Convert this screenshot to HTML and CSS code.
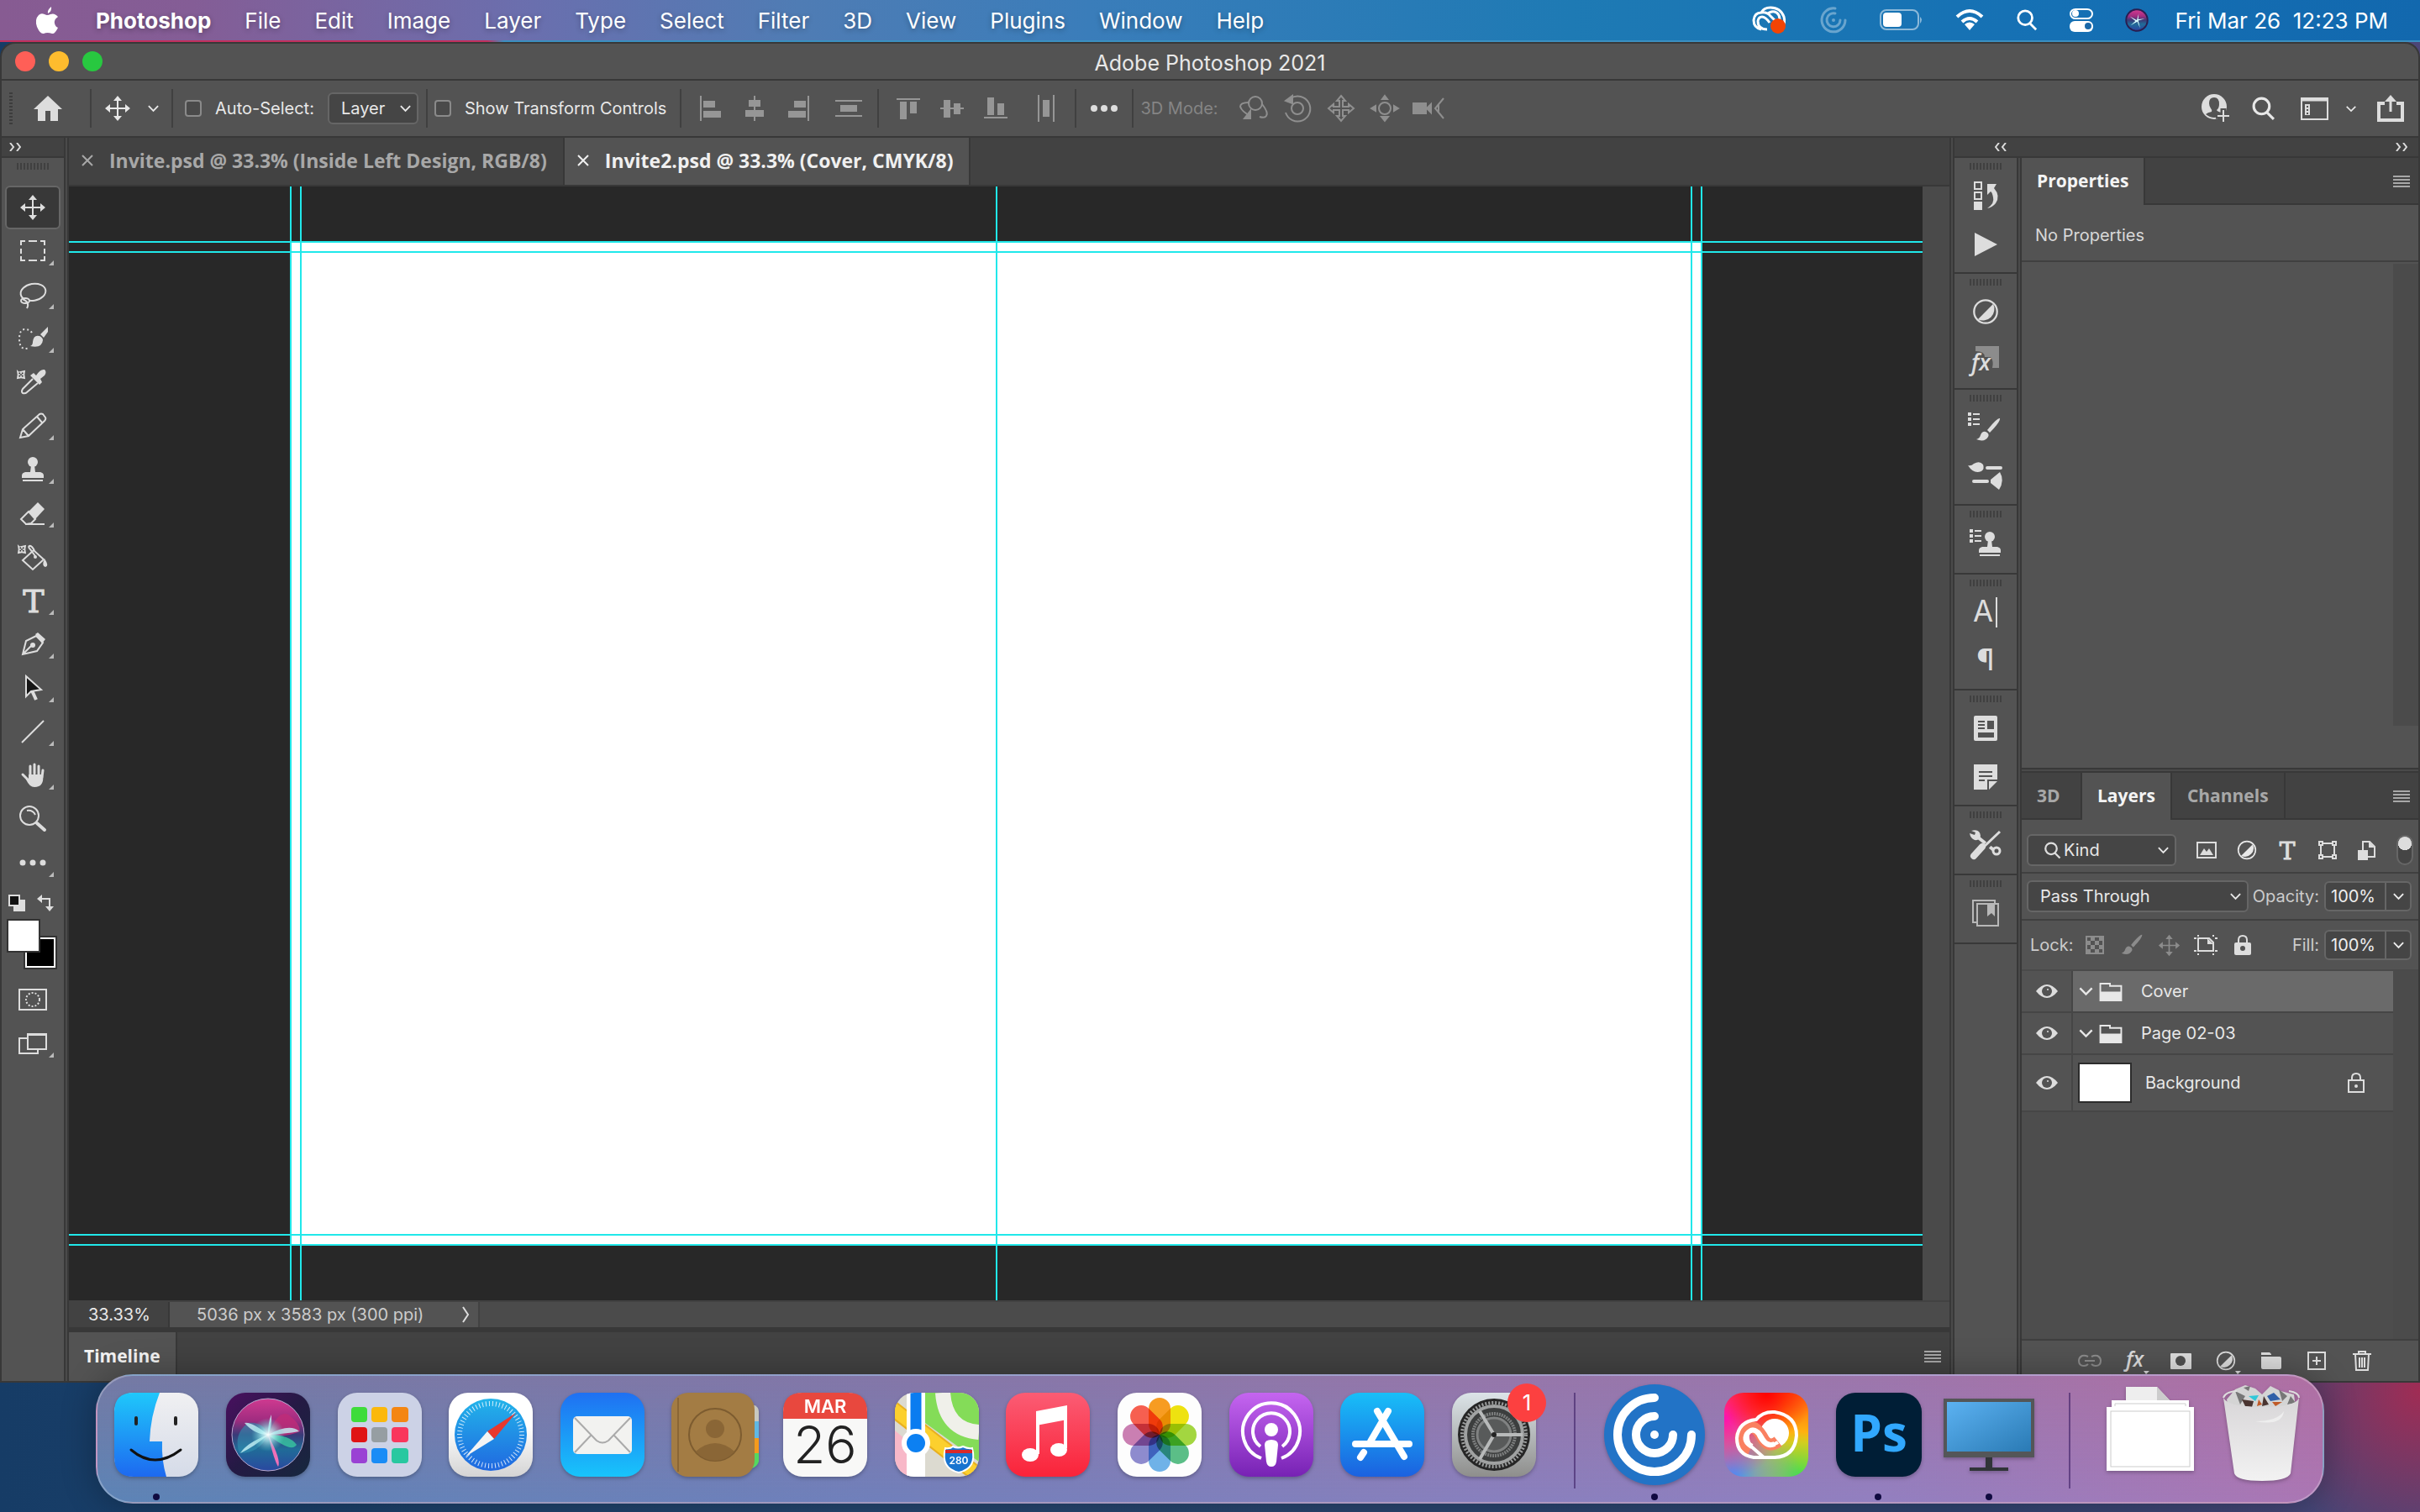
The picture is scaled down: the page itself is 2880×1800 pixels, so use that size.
FILE: index.html
```html
<!DOCTYPE html>
<html lang="en">
<head>
    <meta charset="UTF-8">
    <meta name="viewport" content="width=device-width, initial-scale=1.0">
    <title>Adobe Photoshop 2021</title>
    <link rel="stylesheet" href="styles.css">
</head>
<body>
    <!-- Shared icons -->
    <svg class="sprite" aria-hidden="true">
        <symbol id="chevron" viewBox="0 0 16 10"><path d="M2 2L8 8L14 2" fill="none" stroke="currentColor" stroke-width="2"/></symbol>
        <symbol id="move" viewBox="-16 -16 32 32"><path d="M0-12V12M-12 0H12" stroke="currentColor" stroke-width="2"/><path d="M0-15L5-9H-5ZM0 15L5 9H-5ZM-15 0L-9-5V5ZM15 0L9-5V5Z" fill="currentColor"/></symbol>
        <symbol id="corner" viewBox="-33 -26 66 52"><path d="M25 11V17H19Z" fill="#bbb"/></symbol>
        <symbol id="stamp" viewBox="-16 -16 32 32"><circle cx="0" cy="-9" r="6" fill="currentColor"/><path d="M-2-5H2L3 3H9Q13 4 13 7V10H-13V7Q-13 4-9 3H-3ZM-12 12H12V14H-12Z" fill="currentColor"/></symbol>
        <symbol id="adjust" viewBox="-14 -14 28 28"><circle r="12" fill="none" stroke="currentColor" stroke-width="2"/><path d="M8-8A12 12 0 0 1-8 8Z" fill="currentColor"/></symbol>
        <symbol id="brush" viewBox="0 0 32 32"><path d="M30 2Q27 1 15 16L18 19Q31 6 30 2ZM13 18Q9 17 7 22Q6 26 2 27Q12 31 16 24Q18 20 13 18Z" fill="currentColor"/></symbol>
        <symbol id="presets" viewBox="0 0 14 16"><path d="M0 0H4V4H0ZM0 6H4V10H0ZM0 12H4V16H0ZM6 1H14V3H6ZM6 7H14V9H6ZM6 13H14V15H6Z" fill="currentColor"/></symbol>
        <symbol id="pattern" viewBox="0 0 14 14"><path d="M1 0L4 3L13 1L12 7L13 13L7 12L1 13L2 7Z" fill="currentColor"/><path d="M4 4h2v2h-2zM8 4h2v2h-2zM6 6h2v2h-2zM4 8h2v2h-2zM8 8h2v2h-2z" fill="#333"/></symbol>
        <symbol id="search" viewBox="0 0 28 28"><circle cx="12" cy="11" r="9" fill="none" stroke="currentColor" stroke-width="3"/><path d="M18 18L26 26" stroke="currentColor" stroke-width="3"/></symbol>
        <symbol id="eye" viewBox="0 0 26 16"><path d="M0 8Q13-8 26 8Q13 24 0 8Z" fill="currentColor"/><circle cx="13" cy="8" r="6" fill="#535353"/><circle cx="14" cy="6" r="1" fill="currentColor"/></symbol>
        <symbol id="folder" viewBox="0 0 28 24"><path d="M1 23V2H13V5H27V23Z" fill="none" stroke="currentColor" stroke-width="2"/><path d="M1 12H27V23H1Z" fill="currentColor"/></symbol>
        <symbol id="burger" viewBox="0 0 20 14"><path d="M0 1H20M0 5H20M0 9H20M0 13H20" stroke="#a8a8a8" stroke-width="2"/></symbol>
        <symbol id="close" viewBox="0 0 14 14"><path d="M1 1L13 13M13 1L1 13" stroke="currentColor" stroke-width="2"/></symbol>
        <symbol id="double" viewBox="0 0 14 10"><path d="M1 0L5 5L1 10M9 0L13 5L9 10" fill="none" stroke="#ddd" stroke-width="2"/></symbol>
        <linearGradient id="g-finder" x2="0" y2="1"><stop offset="0" stop-color="#1fc8fb"/><stop offset="1" stop-color="#1d69f0"/></linearGradient>
        <linearGradient id="g-face" x2="0" y2="1"><stop offset="0" stop-color="#f0f0f2"/><stop offset="1" stop-color="#d5dbe8"/></linearGradient>
        <linearGradient id="g-siri" x2="1" y2="1"><stop offset="0" stop-color="#4a1060"/><stop offset="0.5" stop-color="#241a44"/><stop offset="1" stop-color="#16283e"/></linearGradient>
        <linearGradient id="g-orb" x2="0" y2="1"><stop offset="0" stop-color="#d03a90"/><stop offset="0.3" stop-color="#a02c80"/><stop offset="0.5" stop-color="#3a3a78"/><stop offset="0.7" stop-color="#206c98"/><stop offset="1" stop-color="#2a48a0"/></linearGradient>
        <radialGradient id="g-glow"><stop offset="0" stop-color="#fff"/><stop offset="0.4" stop-color="#b0f4f4" stop-opacity="0.7"/><stop offset="1" stop-color="#60d0d0" stop-opacity="0"/></radialGradient>
        <linearGradient id="g-safari" x2="0" y2="1"><stop offset="0" stop-color="#22b4ea"/><stop offset="1" stop-color="#2068e0"/></linearGradient>
        <linearGradient id="g-paper" x2="0" y2="1"><stop offset="0.4" stop-color="#fff"/><stop offset="1" stop-color="#d4d4d4"/></linearGradient>
        <linearGradient id="g-mail" x2="0" y2="1"><stop offset="0" stop-color="#1f70f2"/><stop offset="1" stop-color="#18c4fb"/></linearGradient>
        <linearGradient id="g-music" x2="0" y2="1"><stop offset="0" stop-color="#fb5c74"/><stop offset="1" stop-color="#fa2339"/></linearGradient>
        <linearGradient id="g-podcast" x2="0" y2="1"><stop offset="0" stop-color="#c565f0"/><stop offset="1" stop-color="#7722b4"/></linearGradient>
        <linearGradient id="g-store" x2="0" y2="1"><stop offset="0" stop-color="#18bff8"/><stop offset="1" stop-color="#1b61e0"/></linearGradient>
        <linearGradient id="g-metal" x2="0" y2="1"><stop offset="0" stop-color="#dce4e8"/><stop offset="1" stop-color="#8e8e8c"/></linearGradient>
        <linearGradient id="g-screen" x2="1" y2="1"><stop offset="0" stop-color="#5cb2f2"/><stop offset="1" stop-color="#2a7ab4"/></linearGradient>
        <linearGradient id="g-bin" x2="0" y2="1"><stop offset="0" stop-color="#d8d6d8"/><stop offset="1" stop-color="#f2f2f2"/></linearGradient>
    </svg>

    <!-- Menu bar -->
    <header class="menubar">
        <nav class="menus">
            <button class="apple" aria-label="Apple">
                <svg width="28" height="34" viewBox="0 0 28 34"><path d="M19 1Q20 6 15 9Q14 5 19 1ZM14 11Q16 11 18 10Q23 8 27 13Q22 16 23 21Q24 25 27 26Q23 34 20 33Q14 31 10 33Q6 34 2 25Q-1 16 4 11Q7 8 11 10Q13 11 14 11Z" fill="#fff"/></svg>
            </button>
            <button class="app-name">Photoshop</button>
            <button>File</button>
            <button>Edit</button>
            <button>Image</button>
            <button>Layer</button>
            <button>Type</button>
            <button>Select</button>
            <button>Filter</button>
            <button>3D</button>
            <button>View</button>
            <button>Plugins</button>
            <button>Window</button>
            <button>Help</button>
        </nav>
        <div class="status-icons">
            <svg width="42" height="34" viewBox="0 0 42 34"><path d="M11 28Q2 26 2 17Q3 8 11 8Q14 2 22 2Q34 2 38 13Q40 20 36 26M11 8Q18 7 22 12L30 20M18 28Q7 28 7 18Q8 13 12 13Q16 13 21 20M18 10Q22 6 27 7Q33 9 33 16" fill="none" stroke="#fff" stroke-width="3"/><circle cx="31" cy="24" r="9" fill="#f24405"/></svg>
            <svg width="34" height="34" viewBox="-17 -17 34 34" opacity="0.35"><path d="M2-14A14 14 0 1 0 14 0M2-8A8 8 0 1 0 8 0" fill="none" stroke="#fff" stroke-width="3" stroke-linecap="round"/><circle r="2" fill="#fff"/></svg>
            <svg width="52" height="26" viewBox="0 0 52 26"><rect x="1" y="1" width="45" height="23" rx="7" fill="none" stroke="#fff" stroke-opacity="0.5" stroke-width="2"/><rect x="4" y="4" width="22" height="17" rx="4" fill="#fff"/><path d="M48 9Q52 12 48 17Z" fill="#fff" opacity="0.5"/></svg>
            <svg width="34" height="26" viewBox="0 0 34 26"><path d="M2 9Q17-5 32 9M8 15Q17 7 26 15" fill="none" stroke="#fff" stroke-width="4"/><path d="M11 18Q17 13 23 18L17 25Z" fill="#fff"/></svg>
            <svg width="26" height="26"><use href="#search"/></svg>
            <svg width="28" height="28" viewBox="0 0 28 28"><rect x="1" y="1" width="26" height="11" rx="6" fill="none" stroke="#fff" stroke-width="2"/><circle cx="7" cy="6" r="4" fill="#fff"/><rect y="15" width="28" height="13" rx="6" fill="#fff"/><circle cx="22" cy="21" r="4" fill="#1a68a8"/></svg>
            <svg width="28" height="28" viewBox="0 0 100 100"><circle cx="50" cy="50" r="49" fill="#2a1d50"/><circle cx="50" cy="50" r="42" fill="url(#g-orb)"/><path d="M50 50L20 34L44 54L24 72L52 56L64 84L56 52L84 44L56 46L58 22Z" fill="#d8ffff"/></svg>
        </div>
        <time class="clock">Fri Mar 26&nbsp; 12:23 PM</time>
    </header>

    <!-- Photoshop window -->
    <main class="window">
        <div class="titlebar">
            <div class="lights">
                <button class="light red" aria-label="Close"></button>
                <button class="light yellow" aria-label="Minimize"></button>
                <button class="light green" aria-label="Zoom"></button>
            </div>
            <h1>Adobe Photoshop 2021</h1>
        </div>

        <div class="options">
            <span class="dots-grip"></span>
            <button class="home" aria-label="Home"><svg width="34" height="30" viewBox="0 0 34 30"><path d="M17 0L34 16H29V30H20V18H14V30H5V16H0Z" fill="#ddd"/></svg></button>
            <span class="sep"></span>
            <button class="current-tool" aria-label="Move tool"><svg width="32" height="32"><use href="#move"/></svg><svg width="15" height="10"><use href="#chevron"/></svg></button>
            <span class="sep"></span>
            <label class="check"><input type="checkbox">Auto-Select:</label>
            <span class="select layer-select"><select aria-label="Auto-select target"><option>Layer</option></select><svg width="15" height="10"><use href="#chevron"/></svg></span>
            <span class="sep"></span>
            <label class="check transform"><input type="checkbox">Show Transform Controls</label>
            <span class="sep"></span>
            <div class="align">
                <button aria-label="Align left edges"><svg width="28" height="30" viewBox="0 0 28 30"><path d="M1 0h2v30h-2zM5 6h14v8h-14zM5 18h21v8h-21z"/></svg></button>
                <button aria-label="Align horizontal centers"><svg width="28" height="30" viewBox="0 0 28 30"><path d="M13 0h2v30h-2zM7 5h14v8h-14zM3 17h22v8h-22z"/></svg></button>
                <button aria-label="Align right edges"><svg width="28" height="30" viewBox="0 0 28 30"><path d="M25 0h2v30h-2zM9 6h14v8h-14zM2 18h21v8h-21z"/></svg></button>
                <button class="wide" aria-label="Distribute vertically"><svg width="32" height="30" viewBox="0 0 32 30"><path d="M0 5h32v2h-32zM6 11h20v8h-20zM0 23h32v2h-32z"/></svg></button>
            </div>
            <span class="sep"></span>
            <div class="align">
                <button aria-label="Align top edges"><svg width="28" height="30" viewBox="0 0 28 30"><path d="M0 3h28v2h-28zM4 7h8v21h-8zM16 7h8v14h-8z"/></svg></button>
                <button aria-label="Align vertical centers"><svg width="28" height="30" viewBox="0 0 28 30"><path d="M0 14h28v2h-28zM4 5h8v21h-8zM16 9h8v13h-8z"/></svg></button>
                <button aria-label="Align bottom edges"><svg width="28" height="30" viewBox="0 0 28 30"><path d="M0 25h28v2h-28zM4 2h8v21h-8zM16 9h8v14h-8z"/></svg></button>
                <button class="wide" aria-label="Distribute horizontally"><svg width="22" height="32" viewBox="0 0 22 32"><path d="M1 0h2v32h-2zM7 6h8v20h-8zM19 0h2v32h-2z"/></svg></button>
            </div>
            <span class="sep"></span>
            <button class="more" aria-label="Align and distribute"><svg width="32" height="8" viewBox="0 0 32 8"><circle cx="4" cy="4" r="4"/><circle cx="16" cy="4" r="4"/><circle cx="28" cy="4" r="4"/></svg></button>
            <span class="sep"></span>
            <span class="mode">3D Mode:</span>
            <div class="align outline">
                <button disabled aria-label="Orbit"><svg width="36" height="30" viewBox="0 0 36 30"><circle cx="20" cy="9" r="8"/><path d="M12 8Q2 8 2 13Q4 19 14 24M28 10Q36 20 33 24Q31 27 25 25"/><path d="M14 18L14 27H7Z" fill="#8f8f8f"/></svg></button>
                <button disabled aria-label="Roll"><svg width="34" height="34" viewBox="-17 -17 34 34"><circle r="7"/><path d="M-8-12A15 15 0 1 1-14 5"/><path d="M-6-15L-6-6L-14-9Z" fill="#8f8f8f"/></svg></button>
                <button disabled aria-label="Pan"><svg width="34" height="34" viewBox="-17 -17 34 34"><path d="M0-15L5-9H2V-2H9V-5L15 0L9 5V2H2V9H5L0 15L-5 9H-2V2H-9V5L-15 0L-9-5V-2H-2V-9H-5Z"/></svg></button>
                <button disabled aria-label="Slide"><svg width="36" height="34" viewBox="-18 -17 36 34"><circle r="7"/><path d="M0-15L3-11H-3ZM0 15L4 10H-4ZM-16 0L-11-3V3ZM16 0L11-3V3Z" fill="#8f8f8f"/></svg></button>
                <button disabled aria-label="Zoom camera"><svg width="38" height="26" viewBox="0 0 38 26"><rect x="1" y="7" width="15" height="12" fill="#8f8f8f"/><path d="M17 13L22 8V18Z" fill="#8f8f8f"/><path d="M37 1L27 13L37 25M31 9V17"/></svg></button>
            </div>
            <div class="right-tools">
                <button aria-label="Account"><svg width="36" height="36" viewBox="0 0 36 36"><circle cx="16" cy="16" r="15" fill="#ddd"/><path d="M16 5Q22 5 22 13Q22 18 19 20Q20 22 25 23Q21 29 16 29Q11 29 6 25Q8 23 13 22Q14 20 12 18Q10 15 10 12Q10 5 16 5Z" fill="#535353"/><path d="M27 18V36M18 27H36" stroke="#535353" stroke-width="7"/><path d="M27 20V34M20 27H34" stroke="#ddd" stroke-width="2"/></svg></button>
                <button aria-label="Search"><svg width="29" height="29"><use href="#search"/></svg></button>
                <button class="workspace" aria-label="Workspace"><svg width="33" height="27" viewBox="0 0 33 27"><path d="M1 1H32V26H1Z" fill="none" stroke="#ddd" stroke-width="2"/><path d="M1 1H32V4H1Z" fill="#ddd" stroke="#ddd"/><path d="M5 8H11V21H5Z" fill="#ddd"/><path d="M7 10h2v2h-2zM7 14h2v2h-2zM7 18h2v2h-2z" fill="#535353"/></svg><svg width="14" height="9"><use href="#chevron"/></svg></button>
                <button aria-label="Share"><svg width="32" height="32" viewBox="0 0 32 32"><path d="M9 10H2V30H30V10H23" fill="none" stroke="#ddd" stroke-width="4"/><path d="M16 20V6" stroke="#ddd" stroke-width="3"/><path d="M16 0L23 8H9Z" fill="#ddd"/></svg></button>
            </div>
        </div>

        <div class="workspace-body">
            <!-- Tools -->
            <aside class="tools">
                <div class="strip-head"><svg width="14" height="10"><use href="#double"/></svg></div>
                <div class="grip"></div>
                <div class="tool-list">
                    <button class="tool active" aria-label="Move"><svg viewBox="-33 -26 66 52"><use href="#move" x="-16" y="-16" width="32" height="32"/></svg></button>
                    <button class="tool" aria-label="Marquee"><svg viewBox="-33 -26 66 52"><path d="M-14-7V-12H-9M9-12H14V-7M14 6V11H9M-9 11H-14V6M-5-12H5M-5 11H5M-14-3V3M14-3V3" fill="none" stroke="#ddd" stroke-width="2"/><use href="#corner" x="-33" y="-26" width="66" height="52"/></svg></button>
                    <button class="tool" aria-label="Lasso"><svg viewBox="-33 -26 66 52"><ellipse cx="1" cy="-3" rx="15" ry="10" transform="rotate(-10)" fill="none" stroke="#ddd" stroke-width="2"/><ellipse cx="-9" cy="7" rx="5" ry="3" fill="#535353" stroke="#ddd" stroke-width="2"/><path d="M-12 5Q-3 9-7 16" fill="none" stroke="#ddd" stroke-width="2"/><use href="#corner" x="-33" y="-26" width="66" height="52"/></svg></button>
                    <button class="tool" aria-label="Quick selection"><svg viewBox="-33 -26 66 52"><path d="M-1-7Q-4-11-10-11Q-16-10-16 0Q-16 11-10 12Q-7 12-4 11" fill="none" stroke="#ddd" stroke-width="2" stroke-dasharray="2 3"/><path d="M18-14L9-5L13-1L18-8ZM8-3Q1-5 0 4Q0 8-3 9Q11 12 12 2Q12-1 8-3Z" fill="#ddd"/><use href="#corner" x="-33" y="-26" width="66" height="52"/></svg></button>
                    <button class="tool" aria-label="Eyedropper"><svg viewBox="-33 -26 66 52"><use href="#pattern" x="-20" y="-16" width="12" height="14"/><path d="M0-4L-12 8Q-14 11-12 13Q-9 14-7 12L6 1" fill="none" stroke="#ddd" stroke-width="2"/><path d="M-3-8L1-11L4-8Q9-16 14-15Q17-12 14-8L9-4L11 0L8 3Z" fill="#ddd"/></svg></button>
                    <button class="tool" aria-label="Pencil"><svg viewBox="-33 -26 66 52"><path d="M-15 14L-12 4L8-14Q10-15 12-14L15-10Q16-8 14-6L-5 12ZM5-11L11-4M-12 4L-5 12" fill="none" stroke="#ddd" stroke-width="2"/><use href="#corner" x="-33" y="-26" width="66" height="52"/></svg></button>
                    <button class="tool" aria-label="Clone stamp"><svg viewBox="-33 -26 66 52"><use href="#stamp" x="-16" y="-16" width="32" height="32"/><use href="#corner" x="-33" y="-26" width="66" height="52"/></svg></button>
                    <button class="tool" aria-label="Eraser"><svg viewBox="-33 -26 66 52"><path d="M-5-2L6-13L14-5L3 7Z" fill="#ddd"/><path d="M-5-2L-14 7L-8 13L-2 12L3 7ZM-9 13H14" fill="none" stroke="#ddd" stroke-width="2"/><use href="#corner" x="-33" y="-26" width="66" height="52"/></svg></button>
                    <button class="tool" aria-label="Paint bucket"><svg viewBox="-33 -26 66 52"><use href="#pattern" x="-19" y="-16" width="12" height="14"/><path d="M-12 4L1-8L13 3L0 15ZM3-1L-3-9Q-6-12-4-13Q-1-14 2-7" fill="none" stroke="#ddd" stroke-width="2"/><circle cx="3" cy="0" r="2" fill="#ddd"/><path d="M14 2Q20 11 15 12Q10 11 14 2Z" fill="#ddd"/></svg></button>
                    <button class="tool" aria-label="Type"><svg viewBox="-33 -26 66 52"><text class="slab" x="1" y="14" font-size="38">T</text><use href="#corner" x="-33" y="-26" width="66" height="52"/></svg></button>
                    <button class="tool" aria-label="Pen"><svg viewBox="-33 -26 66 52"><path d="M-12 12L-8-4L4-10L12-2L5 8ZM-12 12L-1 1" fill="none" stroke="#ddd" stroke-width="2"/><circle cx="0" cy="1" r="3" fill="#ddd"/><path d="M3-12L6-14L15-6L11-1Z" fill="#ddd"/><use href="#corner" x="-33" y="-26" width="66" height="52"/></svg></button>
                    <button class="tool" aria-label="Path selection"><svg viewBox="-33 -26 66 52"><path d="M-1 3L4 14" stroke="#ddd" stroke-width="4"/><path d="M-8-14V10L-2 4L10 2Z" fill="#151515" stroke="#ddd" stroke-width="2"/><use href="#corner" x="-33" y="-26" width="66" height="52"/></svg></button>
                    <button class="tool" aria-label="Line"><svg viewBox="-33 -26 66 52"><path d="M-13 13L13-13" stroke="#ddd" stroke-width="2"/><use href="#corner" x="-33" y="-26" width="66" height="52"/></svg></button>
                    <button class="tool" aria-label="Hand"><svg viewBox="-33 -26 66 52"><path d="M-3 0V-11M2-2V-13M7-1V-11M11 2L12-6M-12-1L-4 7" stroke="#ddd" stroke-width="3" stroke-linecap="round"/><path d="M-5-1H12Q14 14 2 14Q-4 14-8 5L-5 5Z" fill="#ddd"/><use href="#corner" x="-33" y="-26" width="66" height="52"/></svg></button>
                    <button class="tool" aria-label="Zoom"><svg viewBox="-33 -26 66 52"><circle cx="-4" cy="-4" r="11" fill="none" stroke="#ddd" stroke-width="2"/><path d="M-7-10Q0-11 3-5" fill="none" stroke="#ddd" stroke-width="2"/><path d="M5 5L14 13" stroke="#ddd" stroke-width="4" stroke-linecap="round"/></svg></button>
                    <button class="tool" aria-label="Edit toolbar"><svg viewBox="-33 -26 66 52"><path d="M-12 0h0M0 0h0M12 0h0" stroke="#ddd" stroke-width="7" stroke-linecap="round"/><use href="#corner" x="-33" y="-26" width="66" height="52"/></svg></button>
                </div>
                <div class="mini-swatches">
                    <button aria-label="Default colors"><svg width="20" height="20" viewBox="0 0 20 20"><path d="M6 6H20V20H6Z" fill="#ddd"/><path d="M1 1H13V13H1Z" fill="#111" stroke="#ddd" stroke-width="2"/></svg></button>
                    <button aria-label="Switch colors"><svg width="20" height="20" viewBox="0 0 20 20"><path d="M4 5H15V15" fill="none" stroke="#ddd" stroke-width="2"/><path d="M0 5L6 0V10ZM15 20L10 14H20Z" fill="#ddd"/></svg></button>
                </div>
                <div class="swatches">
                    <button class="swatch back" aria-label="Background color"></button>
                    <button class="swatch front" aria-label="Foreground color"></button>
                </div>
                <button class="tool" aria-label="Quick mask"><svg viewBox="-33 -26 66 52"><rect x="-16" y="-12" width="32" height="24" fill="none" stroke="#ddd" stroke-width="2"/><circle r="8" fill="none" stroke="#ddd" stroke-width="2" stroke-dasharray="2 2"/></svg></button>
                <button class="tool" aria-label="Screen mode"><svg viewBox="-33 -26 66 52"><path d="M-6-6H-16V12H6V7" fill="none" stroke="#ddd" stroke-width="2"/><rect x="-6" y="-11" width="22" height="18" fill="#535353" stroke="#ddd" stroke-width="2"/><path d="M-6-11H16V-9H-6Z" fill="#ddd"/><use href="#corner" x="-33" y="-26" width="66" height="52"/></svg></button>
            </aside>

            <!-- Document -->
            <section class="document">
                <div class="doc-tabs">
                    <div class="doc-tab"><button aria-label="Close Invite.psd"><svg width="14" height="14"><use href="#close"/></svg></button>Invite.psd @ 33.3% (Inside Left Design, RGB/8)</div>
                    <div class="doc-tab active"><button aria-label="Close Invite2.psd"><svg width="14" height="14"><use href="#close"/></svg></button>Invite2.psd @ 33.3% (Cover, CMYK/8)</div>
                </div>
                <div class="view">
                    <div class="canvas">
                        <div class="page"></div>
                        <i class="guide v g1"></i>
                        <i class="guide v g2"></i>
                        <i class="guide v g3"></i>
                        <i class="guide v g4"></i>
                        <i class="guide v g5"></i>
                        <i class="guide h g6"></i>
                        <i class="guide h g7"></i>
                        <i class="guide h g8"></i>
                        <i class="guide h g9"></i>
                    </div>
                    <div class="scrollbar"></div>
                </div>
                <div class="doc-status">
                    <input class="zoom-level" type="text" value="33.33%" aria-label="Zoom level">
                    <button class="doc-info">5036 px x 3583 px (300 ppi)<svg width="10" height="20" viewBox="0 0 10 20"><path d="M2 1L8 10L2 19" fill="none" stroke="#ddd" stroke-width="2"/></svg></button>
                </div>
                <div class="timeline">
                    <button class="panel-tab active">Timeline</button>
                    <button class="panel-menu" aria-label="Timeline menu"><svg width="20" height="14"><use href="#burger"/></svg></button>
                </div>
            </section>

            <!-- Panels -->
            <aside class="right">
                <div class="strip-head split">
                    <svg class="flip" width="14" height="10"><use href="#double"/></svg>
                    <svg width="14" height="10"><use href="#double"/></svg>
                </div>
                <div class="right-body">
                    <div class="icon-strip">
                        <div class="icon-group">
                            <div class="grip"></div>
                            <button aria-label="History"><svg width="32" height="36" viewBox="0 0 32 36"><path d="M3 2h8v8h-8zM3 14h8v8h-8z" fill="none" stroke="#ddd" stroke-width="2"/><path d="M2 25h10v10h-10zM18 4H29L26 9Q34 18 28 27Q24 32 18 33Q27 27 25 20Q24 14 22 13L18 17Z" fill="#ddd"/></svg></button>
                            <button aria-label="Actions"><svg width="28" height="28" viewBox="0 0 28 28"><path d="M1 0L28 14L1 28Z" fill="#ddd"/></svg></button>
                        </div>
                        <div class="icon-group">
                            <div class="grip"></div>
                            <button aria-label="Adjustments"><svg width="32" height="32"><use href="#adjust"/></svg></button>
                            <button aria-label="Styles"><svg width="36" height="38" viewBox="0 0 36 38"><path d="M6 2H34V28H26Q28 20 24 15H17Q17 8 6 8Z" fill="#8c8c8c"/><text class="fx" x="1" y="31" font-size="27">fx</text></svg></button>
                        </div>
                        <div class="icon-group">
                            <div class="grip"></div>
                            <button aria-label="Brush settings"><svg width="42" height="38" viewBox="0 0 42 38"><use href="#presets" x="0" y="1" width="14" height="16"/><use href="#brush" x="7" y="6" width="34" height="32"/></svg></button>
                            <button aria-label="Brushes"><svg width="42" height="34" viewBox="0 0 42 34"><path d="M0 4Q4 5 7 2Q14-2 18 3Q20 8 16 11Q7 15 0 4ZM38 12Q44 22 37 33L27 25V21Z" fill="#ddd"/><path d="M23 7H39M7 23H23" stroke="#ddd" stroke-width="4" stroke-linecap="round"/></svg></button>
                        </div>
                        <div class="icon-group">
                            <div class="grip"></div>
                            <button aria-label="Clone source"><svg width="42" height="38" viewBox="0 0 42 38"><use href="#presets" x="2" y="2" width="14" height="16"/><use href="#stamp" x="10" y="4" width="32" height="32"/></svg></button>
                        </div>
                        <div class="icon-group">
                            <div class="grip"></div>
                            <button aria-label="Character"><svg width="32" height="38" viewBox="0 0 32 38"><text class="plain" x="1" y="30" font-size="35">A</text><path d="M29 1V37" stroke="#ddd" stroke-width="2"/></svg></button>
                            <button aria-label="Paragraph"><svg width="32" height="38" viewBox="0 0 32 38"><text class="plain" x="5" y="30" font-size="36">¶</text></svg></button>
                        </div>
                        <div class="icon-group">
                            <div class="grip"></div>
                            <button aria-label="Libraries"><svg width="28" height="30" viewBox="0 0 28 30"><rect width="28" height="30" rx="2" fill="#ddd"/><path d="M5 7H13M5 11H13M5 15H13" stroke="#535353" stroke-width="2"/><path d="M16 6h8v10h-8zM5 20h19v6h-19z" fill="#535353"/></svg></button>
                            <button aria-label="Notes"><svg width="28" height="30" viewBox="0 0 28 30"><path d="M0 0H28V18H16V30H0ZM18 20H28L18 30Z" fill="#ddd"/><path d="M6 9H22M6 14H22M6 19H13" stroke="#535353" stroke-width="2"/></svg></button>
                        </div>
                        <div class="icon-group">
                            <div class="grip"></div>
                            <button aria-label="Tool presets"><svg width="38" height="34" viewBox="0 0 38 34"><path d="M9 8L30 25" stroke="#ddd" stroke-width="4"/><path d="M0 4L6 6L7 3L2 1Q12-2 13 7Q12 13 6 12Q1 10 0 4Z" fill="#ddd"/><circle cx="32" cy="25" r="4" fill="#535353" stroke="#ddd" stroke-width="3"/><path d="M35 3L18 22" stroke="#535353" stroke-width="7"/><path d="M36 2L16 21" stroke="#ddd" stroke-width="3"/><path d="M15 20L5 31" stroke="#ddd" stroke-width="8" stroke-linecap="round"/></svg></button>
                        </div>
                        <div class="icon-group">
                            <div class="grip"></div>
                            <button aria-label="Layer comps"><svg width="34" height="34" viewBox="0 0 34 34"><path d="M6 28H2V2H28V6M7 6H32V32H7Z" fill="none" stroke="#b8b8b8" stroke-width="2"/><path d="M19 6H28V21L24 17L19 21Z" fill="#b8b8b8"/></svg></button>
                        </div>
                    </div>

                    <div class="panels">
                        <section class="properties">
                            <div class="panel-tabs">
                                <button class="panel-tab active">Properties</button>
                                <button class="panel-menu" aria-label="Properties menu"><svg width="20" height="14"><use href="#burger"/></svg></button>
                            </div>
                            <p class="no-properties">No Properties</p>
                            <div class="properties-body"><div class="track"></div></div>
                        </section>

                        <section class="layers">
                            <div class="panel-tabs">
                                <button class="panel-tab">3D</button>
                                <button class="panel-tab active">Layers</button>
                                <button class="panel-tab">Channels</button>
                                <button class="panel-menu" aria-label="Layers menu"><svg width="20" height="14"><use href="#burger"/></svg></button>
                            </div>
                            <div class="layer-row filter">
                                <span class="select kind"><svg class="lens" width="21" height="21"><use href="#search"/></svg><select aria-label="Filter type"><option>Kind</option></select><svg width="15" height="10"><use href="#chevron"/></svg></span>
                                <div class="filter-icons">
                                    <button aria-label="Pixel layers"><svg width="24" height="20" viewBox="0 0 24 20"><rect x="1" y="1" width="22" height="18" fill="none" stroke="#ddd" stroke-width="2"/><path d="M4 16L9 8L12 12L15 8L20 16Z" fill="#ddd"/></svg></button>
                                    <button aria-label="Adjustment layers"><svg width="24" height="24"><use href="#adjust"/></svg></button>
                                    <button aria-label="Type layers"><svg width="24" height="24" viewBox="-12 -12 24 24"><text class="slab" x="0" y="11" font-size="28">T</text></svg></button>
                                    <button aria-label="Shape layers"><svg width="24" height="24" viewBox="0 0 24 24"><path d="M4 4H20V20H4Z" fill="none" stroke="#ddd" stroke-width="2"/><path d="M2 2h4v4h-4zM18 2h4v4h-4zM2 18h4v4h-4zM18 18h4v4h-4z" fill="#535353" stroke="#ddd" stroke-width="2"/></svg></button>
                                    <button aria-label="Smart objects"><svg width="22" height="24" viewBox="0 0 22 24"><path d="M6 12V2H14L20 8V20H12" fill="none" stroke="#ddd" stroke-width="2"/><path d="M0 12H12V24H0ZM13 2V9H20" fill="#ddd"/></svg></button>
                                </div>
                                <input class="toggle" type="checkbox" aria-label="Layer filtering">
                            </div>
                            <div class="layer-row">
                                <span class="select blend"><select aria-label="Blend mode"><option>Pass Through</option></select><svg width="15" height="10"><use href="#chevron"/></svg></span>
                                <label class="amount">Opacity:<span><input type="text" value="100%"><button aria-label="Opacity slider"><svg width="15" height="10"><use href="#chevron"/></svg></button></span></label>
                            </div>
                            <div class="layer-row locks">
                                <span class="lock-label">Lock:</span>
                                <div class="lock-icons">
                                    <button class="dim" aria-label="Lock transparent pixels"><svg width="22" height="22" viewBox="0 0 22 22"><rect x="1" y="1" width="20" height="20" fill="none" stroke="currentColor" stroke-width="2"/><path d="M6 2h5v4h-5zM16 2h4v4h-4zM2 6h4v5h-4zM11 6h5v5h-5zM6 11h5v5h-5zM16 11h4v5h-4zM2 16h4v4h-4zM11 16h5v4h-5z" fill="currentColor"/></svg></button>
                                    <button class="dim" aria-label="Lock image pixels"><svg width="28" height="28"><use href="#brush"/></svg></button>
                                    <button class="dim" aria-label="Lock position"><svg width="27" height="27"><use href="#move"/></svg></button>
                                    <button aria-label="Lock artboard"><svg width="28" height="24" viewBox="0 0 28 24"><path d="M5 4H18L23 9V19H5Z" fill="none" stroke="#ddd" stroke-width="2"/><path d="M16 4V11H23ZM0 3h3v2h-3zM4 0h2v2h-2zM25 3h3v2h-3zM22 0h2v2h-2zM0 18h3v2h-3zM4 22h2v2h-2zM25 18h3v2h-3zM22 22h2v2h-2z" fill="#ddd"/></svg></button>
                                    <button aria-label="Lock all"><svg width="20" height="24" viewBox="0 0 20 24"><path d="M5 11V6Q5 1 10 1Q15 1 15 6V11" fill="none" stroke="#ddd" stroke-width="2"/><rect y="9" width="20" height="15" rx="2" fill="#ddd"/><circle cx="10" cy="16" r="3" fill="#535353"/></svg></button>
                                </div>
                                <label class="amount">Fill:<span><input type="text" value="100%"><button aria-label="Fill slider"><svg width="15" height="10"><use href="#chevron"/></svg></button></span></label>
                            </div>
                            <div class="layer-area">
                                <ul class="layer-list">
                                    <li class="selected"><button class="vis" aria-label="Hide Cover"><svg width="26" height="16"><use href="#eye"/></svg></button><div class="layer"><svg width="19" height="12"><use href="#chevron"/></svg><svg width="28" height="23"><use href="#folder"/></svg><span class="group-name">Cover</span></div></li>
                                    <li><button class="vis" aria-label="Hide Page 02-03"><svg width="26" height="16"><use href="#eye"/></svg></button><div class="layer"><svg width="19" height="12"><use href="#chevron"/></svg><svg width="28" height="23"><use href="#folder"/></svg><span class="group-name">Page 02-03</span></div></li>
                                    <li class="tall"><button class="vis" aria-label="Hide Background"><svg width="26" height="16"><use href="#eye"/></svg></button><div class="layer"><span class="thumb"></span>Background<svg class="locked" width="20" height="24" viewBox="0 0 20 24"><path d="M5 9V6Q5 1 10 1Q15 1 15 6V9M1 9H19V23H1Z" fill="none" stroke="#ddd" stroke-width="2"/><circle cx="10" cy="16" r="2" fill="#ddd"/></svg></div></li>
                                </ul>
                                <div class="track"></div>
                            </div>
                            <div class="layer-actions">
                                <button class="dim" aria-label="Link layers"><svg width="28" height="16" viewBox="0 0 28 16"><path d="M12 3Q8 1 5 2Q1 4 1 8Q1 14 7 14Q10 14 12 12M16 3Q20 1 23 2Q27 4 27 8Q27 14 21 14Q18 14 16 12M8 8H20" fill="none" stroke="currentColor" stroke-width="2"/></svg></button>
                                <button aria-label="Layer effects"><svg width="30" height="36" viewBox="0 0 30 36"><text class="fx" x="4" y="25" font-size="25">fx</text><path d="M25 30H32L28 34Z" fill="#ddd"/></svg></button>
                                <button aria-label="Layer mask"><svg width="25" height="19" viewBox="0 0 25 19"><rect width="25" height="19" rx="1" fill="#ddd"/><circle cx="12" cy="9" r="6" fill="#505050"/></svg></button>
                                <button aria-label="New adjustment layer"><svg width="34" height="36" viewBox="0 0 34 36"><use href="#adjust" x="5" y="6" width="24" height="24"/><path d="M28 30H35L31 34Z" fill="#ddd"/></svg></button>
                                <button aria-label="New group"><svg width="24" height="20" viewBox="0 0 24 20"><path d="M0 0H10L12 2V3H0ZM0 5H22Q24 5 24 7V18Q24 20 22 20H2Q0 20 0 18Z" fill="#ddd"/></svg></button>
                                <button aria-label="New layer"><svg width="22" height="22" viewBox="0 0 22 22"><path d="M1 1H21V21H1ZM11 6V16M6 11H16" fill="none" stroke="#ddd" stroke-width="2"/></svg></button>
                                <button aria-label="Delete layer"><svg width="22" height="24" viewBox="0 0 22 24"><path d="M0 4H22M7 4V1H15V4M3 4L4 23H18L19 4M8 8V20M11 8V20M14 8V20" fill="none" stroke="#ddd" stroke-width="2"/></svg></button>
                            </div>
                        </section>
                    </div>
                </div>
            </aside>
        </div>
    </main>

    <!-- Dock -->
    <ul class="dock">
        <li class="running"><svg viewBox="0 0 100 100"><rect width="100" height="100" rx="23" fill="url(#g-face)"/><path d="M54 0Q43 28 42 58H57Q56 80 62 100H23Q0 100 0 77V23Q0 0 23 0Z" fill="url(#g-finder)"/><path d="M26 30V37M73 30V37" stroke="#222" stroke-width="4" stroke-linecap="round"/><path d="M20 68Q48 92 79 68" fill="none" stroke="#111" stroke-width="3" stroke-linecap="round"/></svg></li>
        <li><svg viewBox="0 0 100 100"><rect width="100" height="100" rx="23" fill="url(#g-siri)"/><circle cx="50" cy="50" r="43" fill="url(#g-orb)" stroke="#b8a8d0" stroke-width="1"/><path d="M50 50Q62 20 74 26Q88 36 88 46Q70 54 50 50Z" fill="#c02c78" opacity="0.8"/><path d="M50 50Q76 50 84 62Q78 72 50 50Z" fill="#38c8a0" opacity="0.8"/><path d="M50 50Q40 72 16 72Q8 50 26 36Q44 34 50 50Z" fill="#3090b0" opacity="0.6"/><path d="M50 50Q30 34 22 36Q34 50 50 50Q76 36 87 46Q70 49 50 50Q24 60 17 72Q34 64 50 50Q50 34 54 26Q55 40 50 50Z" fill="#c8f4f8" opacity="0.8"/><path d="M50 50Q66 80 62 88Q57 80 50 50Z" fill="#f070b8"/><circle cx="50" cy="50" r="20" fill="url(#g-glow)"/></svg></li>
        <li><svg viewBox="0 0 100 100"><rect width="100" height="100" rx="23" fill="#ccd2e6"/><rect x="16" y="17" width="19" height="18" rx="4" fill="#3edc3a"/><rect x="40" y="17" width="19" height="18" rx="4" fill="#fbb80c"/><rect x="64" y="17" width="20" height="18" rx="4" fill="#f48612"/><rect x="16" y="41" width="19" height="18" rx="4" fill="#e01414"/><rect x="40" y="41" width="19" height="18" rx="4" fill="#969ea2"/><rect x="64" y="41" width="20" height="18" rx="4" fill="#f9365c"/><rect x="16" y="66" width="19" height="18" rx="4" fill="#9a42d4"/><rect x="40" y="66" width="19" height="18" rx="4" fill="#1a8cf6"/><rect x="64" y="66" width="20" height="18" rx="4" fill="#28c8a0"/></svg></li>
        <li><svg viewBox="0 0 100 100"><rect width="100" height="100" rx="23" fill="url(#g-paper)"/><circle cx="50" cy="50" r="43" fill="url(#g-safari)"/><circle cx="50" cy="50" r="37" fill="none" stroke="#fff" stroke-width="6" stroke-dasharray="1 3" opacity="0.8"/><path d="M80 24L54 55L46 46Z" fill="#e8382e"/><path d="M20 76L46 46L54 55Z" fill="#f4f4f4"/></svg></li>
        <li><svg viewBox="0 0 100 100"><rect width="100" height="100" rx="23" fill="url(#g-mail)"/><rect x="15" y="28" width="70" height="45" rx="5" fill="#f2f2f0"/><path d="M17 71L36 51M83 71L64 51M17 30L43 57Q50 62 57 57L83 30" fill="none" stroke="#aaa" stroke-width="2"/></svg></li>
        <li><svg viewBox="0 0 100 100"><path d="M96 14Q104 16 104 22V34H90Z" fill="#c8c8c0"/><path d="M90 34H104V54H90Z" fill="#60b8e4"/><path d="M90 54H104V72H90Z" fill="#f49a1c"/><path d="M90 72H104V82Q102 88 96 90Z" fill="#54d860"/><rect width="99" height="100" rx="20" fill="#a37c44"/><path d="M8 6V94" stroke="#8a6636" stroke-width="2"/><circle cx="52" cy="50" r="31" fill="none" stroke="#7d5c30" stroke-width="2"/><circle cx="52" cy="43" r="11" fill="#8a6636"/><path d="M29 70Q40 60 52 60Q64 60 75 70Q66 81 52 81Q38 81 29 70Z" fill="#8a6636"/></svg></li>
        <li><svg viewBox="0 0 100 100"><rect width="100" height="100" rx="23" fill="#f8f8f7"/><path d="M0 31V23Q0 0 23 0H77Q100 0 100 23V31Z" fill="#e8483e"/><text class="cal-month" x="50" y="24">MAR</text><text class="cal-day" x="50" y="84">26</text></svg></li>
        <li><svg viewBox="0 0 100 100"><clipPath id="c-map"><rect width="100" height="100" rx="23"/></clipPath><g clip-path="url(#c-map)"><rect width="100" height="100" fill="#dcdad0"/><path d="M0 45L18 60V100H0Z" fill="#f8b8c8"/><path d="M36 0H100V82L36 36Z" fill="#84dc58"/><path d="M57 0Q60 44 100 47" fill="none" stroke="#f0f0ea" stroke-width="18"/><path d="M-4 18L104 102" stroke="#e8b020" stroke-width="19"/><path d="M-4 18L104 102" stroke="#fcd02e" stroke-width="15"/><path d="M25 0V100" stroke="#fff" stroke-width="22"/><path d="M25 0V50" stroke="#0a7cf0" stroke-width="13"/></g><circle cx="25" cy="60" r="17" fill="#fff"/><circle cx="25" cy="60" r="11" fill="#0c80f2"/><path d="M60 66Q66 67 69 64Q75 67 81 64Q87 67 92 66Q98 90 76 95Q54 90 60 66Z" fill="#1874d0" stroke="#fff" stroke-width="2"/><path d="M60 68H92V72H60Z" fill="#d82a2a"/><text class="route" x="76" y="85">280</text></svg></li>
        <li><svg viewBox="0 0 100 100"><rect width="100" height="100" rx="23" fill="url(#g-music)"/><path d="M36 22L73 15V32L36 39Z" fill="#fff"/><path d="M38 24V73M71 18V66" stroke="#fff" stroke-width="4"/><ellipse cx="29" cy="74" rx="10" ry="8" fill="#fff"/><ellipse cx="63" cy="68" rx="10" ry="8" fill="#fff"/></svg></li>
        <li><svg viewBox="0 0 100 100"><rect width="100" height="100" rx="23" fill="#fdfdfd"/><g class="petals"><rect x="37" y="6" width="26" height="44" rx="13" fill="#f99d22"/><rect x="37" y="6" width="26" height="44" rx="13" fill="#f0e410" transform="rotate(45 50 50)"/><rect x="37" y="6" width="26" height="44" rx="13" fill="#a4d840" transform="rotate(90 50 50)"/><rect x="37" y="6" width="26" height="44" rx="13" fill="#5cc088" transform="rotate(135 50 50)"/><rect x="37" y="6" width="26" height="44" rx="13" fill="#70b4ea" transform="rotate(180 50 50)"/><rect x="37" y="6" width="26" height="44" rx="13" fill="#8f8cd0" transform="rotate(225 50 50)"/><rect x="37" y="6" width="26" height="44" rx="13" fill="#cc80b4" transform="rotate(270 50 50)"/><rect x="37" y="6" width="26" height="44" rx="13" fill="#f86050" transform="rotate(315 50 50)"/></g></svg></li>
        <li><svg viewBox="0 0 100 100"><rect width="100" height="100" rx="23" fill="url(#g-podcast)"/><path d="M38 78A34 34 0 1 1 62 78M37 64A22 22 0 1 1 63 64" fill="none" stroke="#fff" stroke-width="4"/><circle cx="50" cy="44" r="8" fill="#fff"/><path d="M42 62Q42 56 50 56Q58 56 58 62L56 82Q55 88 50 88Q45 88 44 82Z" fill="#fff"/></svg></li>
        <li><svg viewBox="0 0 100 100"><rect width="100" height="100" rx="23" fill="url(#g-store)"/><path d="M57 22L36 58M44 22L76 76M18 61H82M28 71L24 77" stroke="#fff" stroke-width="8" stroke-linecap="round"/></svg></li>
        <li><svg viewBox="0 0 100 100"><rect width="100" height="100" rx="23" fill="url(#g-metal)"/><circle cx="50" cy="50" r="43" fill="#262626"/><circle cx="50" cy="50" r="38" fill="none" stroke="#9a9c9c" stroke-width="4" stroke-dasharray="2 2"/><circle cx="50" cy="50" r="34" fill="#3c3e3e" stroke="#a0a2a2" stroke-width="4"/><circle cx="50" cy="50" r="25" fill="none" stroke="#7c7e7e" stroke-width="4" stroke-dasharray="2 1"/><circle cx="50" cy="50" r="20" fill="#585a5a" stroke="#808282" stroke-width="3"/><path d="M50 50H84M50 50L33 22M50 50L33 79" stroke="#b8baba" stroke-width="4"/><circle cx="50" cy="50" r="3" fill="#222"/></svg><span class="badge">1</span></li>
        <li class="divider"></li>
        <li class="running"><svg viewBox="0 0 100 100"><circle cx="50" cy="50" r="60" fill="#2273c6"/><path d="M50 6A44 44 0 1 0 94 50M50 28A22 22 0 1 0 72 50" fill="none" stroke="#fff" stroke-width="10" stroke-linecap="round"/><circle cx="50" cy="50" r="5" fill="#fff"/></svg></li>
        <li><div class="cc"><svg viewBox="0 0 100 100"><circle cx="60" cy="48" r="17" fill="#fff"/><path d="M31 67Q18 62 20 51Q26 38 36 42Q42 46 47 56Q54 66 64 58" fill="none" stroke="#fa8060" stroke-width="14"/><path d="M47 77H35Q15 74 15 54Q17 34 38 32Q46 22 60 23Q86 27 86 51Q84 76 60 77H47L31 63Q24 50 32 44Q40 42 46 54Q53 66 64 59" fill="none" stroke="#fff" stroke-width="4"/><path d="M33 64Q22 58 27 49Q34 40 41 49Q49 66 60 61" fill="none" stroke="#fff" stroke-width="6"/></svg></div></li>
        <li class="running"><svg viewBox="0 0 100 100"><rect width="102" height="100" rx="23" fill="#001e36"/><text class="ps" x="51" y="70">Ps</text></svg></li>
        <li class="running"><svg viewBox="0 0 100 100"><rect x="-4" y="7" width="108" height="70" fill="#545658"/><rect x="0" y="11" width="100" height="59" fill="url(#g-screen)"/><path d="M46 77H54V89H73V93H27V89H46Z" fill="#303438"/></svg></li>
        <li class="divider"></li>
        <li><svg viewBox="0 0 100 100"><path d="M21-7H58L74 10H21Z" fill="#eee"/><path d="M58-7L74 10H58Z" fill="#ccc"/><path d="M4 9H96V20H4Z" fill="#fff"/><path d="M8 16V13H92V16" fill="none" stroke="#ccc"/><rect x="-2" y="17" width="104" height="76" fill="#fff"/><rect x="3" y="22" width="94" height="66" fill="none" stroke="#ccc"/></svg></li>
        <li><svg viewBox="0 0 100 100"><path d="M8 8L18-4L30-9L42-5L50 2L60-8L72-2L88 2L90 18H10Z" fill="#d4d4d4"/><path d="M18-2L30 4L24 14ZM28-6L36-8L34-2ZM70-4L80 4L74 10ZM84 4L90 12L80 14Z" fill="#777"/><path d="M26 8L40 10L38 17L30 16ZM52 4L58 14L50 16Z" fill="#4a3430"/><path d="M34 4L46 3L42 10Z" fill="#30c8d8"/><path d="M56 4L64 0L72 8L60 10Z" fill="#3060a8"/><path d="M46 8L50 14L44 16ZM62 11L74 11L66 16Z" fill="#c05a28"/><path d="M4 6Q10 17 50 17Q90 17 94 6L84 96Q80 105 50 105Q20 105 17 96Z" fill="url(#g-bin)"/><path d="M4 6Q6-1 20-2M94 6Q94 0 82-2" fill="none" stroke="#ddd" stroke-width="2"/><path d="M42 34Q68 34 76 22Q74 40 42 34Z" fill="#eee"/></svg></li>
    </ul>
</body>
</html>
```
FILE: styles.css
```css
* {
    box-sizing: border-box;
}
body {
    margin: 0;
    height: 100vh;
    display: flex;
    flex-direction: column;
    position: relative;
    overflow: hidden;
    font-family: Inter, "Liberation Sans", sans-serif;
    font-size: 20px;
    color: #e8e8e8;
    background:
        radial-gradient(circle 190px at 100% 92%, #a02c54, rgba(112, 40, 90, 0) 100%),
        linear-gradient(to right, #163c66, #24466f 35%, #2f4470 80%, #4c4678);
}
button, input, select {
    font: inherit;
    color: inherit;
    margin: 0;
    padding: 0;
    border: 0;
    background: none;
}
button {
    display: flex;
    align-items: center;
    justify-content: center;
}
ul {
    list-style: none;
    margin: 0;
    padding: 0;
}
svg {
    display: block;
    flex: none;
    overflow: visible;
}
.sprite {
    position: absolute;
    width: 0;
    height: 0;
}

/* Menu bar */
.menubar {
    flex: 0 0 50px;
    display: flex;
    align-items: center;
    padding: 0 38px 2px 42px;
    font-size: 26px;
    color: #fff;
    background:
        linear-gradient(to right, #c2305e 580px, #3b8fc0 600px) bottom / 100% 2px no-repeat,
        linear-gradient(to right, #875b92 0, #845d96 8%, #6a6fae 22%, #4f7cb4 33%, #3a7dba 45%, #1e7ab4 65%, #1570b4 85%, #1268ae);
}
.menus {
    display: flex;
    gap: 40px;
    flex: 1;
}
.menus button {
    text-shadow: 0 2px 6px rgba(0, 0, 0, 0.3);
}
.menus .apple {
    padding-right: 4px;
}
.menus .app-name {
    font-weight: 700;
}
.status-icons {
    display: flex;
    align-items: center;
    gap: 38px;
    margin-right: 32px;
}

/* Window */
.window {
    flex: 1;
    min-height: 0;
    margin-bottom: 154px;
    display: flex;
    flex-direction: column;
    border: 2px solid #383838;
    border-radius: 18px 18px 0 0;
    background: #535353;
}
.titlebar {
    flex: 0 0 44px;
    display: grid;
    grid-template-columns: 1fr auto 1fr;
    align-items: center;
    border-bottom: 2px solid #383838;
}
.titlebar h1 {
    margin: 0;
    padding-top: 3px;
    font-size: 25px;
    font-weight: 400;
}
.lights {
    display: flex;
    gap: 16px;
    padding-left: 16px;
}
.light {
    width: 24px;
    height: 24px;
    border-radius: 50%;
}
.red { background: #ff5f57; }
.yellow { background: #febc2e; }
.green { background: #28c840; }

/* Options bar */
.options {
    flex: 0 0 68px;
    display: flex;
    align-items: center;
    border-bottom: 2px solid #383838;
}
.dots-grip {
    width: 4px;
    height: 38px;
    margin-left: 9px;
    background: repeating-linear-gradient(#3c3c3c 0 2px, transparent 2px 4px);
}
.home {
    width: 92px;
    padding-right: 8px;
}
.sep {
    width: 2px;
    height: 46px;
    background: #404040;
}
.current-tool {
    width: 95px;
    gap: 19px;
}
.check {
    display: flex;
    align-items: center;
    gap: 16px;
    padding: 0 16px 0 14px;
}
.check.transform {
    padding: 0 16px 0 8px;
}
.check input {
    appearance: none;
    width: 20px;
    height: 20px;
    border: 2px solid #8a8a8a;
    border-radius: 4px;
    background: #4a4a4a;
}
.select {
    display: grid;
    align-items: center;
    height: 38px;
    border: 2px solid #666;
    border-radius: 6px;
    background: #454545;
}
.select > * {
    grid-area: 1 / 1;
}
.select select {
    appearance: none;
    width: 100%;
    height: 100%;
    padding-left: 14px;
}
.select svg {
    justify-self: end;
    margin-right: 6px;
    pointer-events: none;
}
.layer-select {
    width: 108px;
    margin-right: 9px;
}
.align {
    display: flex;
    margin: 0 0 0 9px;
}
.align button {
    width: 52px;
    fill: #969696;
}
.align .wide {
    width: 68px;
}
.align.outline svg {
    fill: none;
    stroke: #8f8f8f;
    stroke-width: 2;
}
.more {
    width: 66px;
    fill: #ddd;
}
.mode {
    margin: 0 7px 0 8px;
    color: #858585;
}
.right-tools {
    display: flex;
    align-items: center;
    gap: 24px;
    margin: 0 17px 0 auto;
}
.workspace {
    gap: 20px;
    margin-left: 6px;
}

/* Columns */
.workspace-body {
    flex: 1;
    min-height: 0;
    display: flex;
    gap: 2px;
    background: #4a4a4a;
}
.strip-head {
    flex: 0 0 24px;
    display: flex;
    align-items: center;
    padding-left: 9px;
    background: #424242;
    border-bottom: 2px solid #383838;
}
.strip-head.split {
    justify-content: space-between;
    padding: 0 13px 0 48px;
}
.flip {
    transform: scaleX(-1);
}
.grip {
    width: 38px;
    height: 8px;
    margin: 6px auto 2px;
    background: repeating-linear-gradient(to right, #404040 0 2px, transparent 2px 4px);
}

/* Tools */
.tools {
    flex: 0 0 76px;
    display: flex;
    flex-direction: column;
    background: #535353;
    border-right: 2px solid #383838;
}
.tools .grip {
    flex: none;
    margin-bottom: 19px;
}
.tool {
    flex: none;
    width: 66px;
    height: 52px;
    margin-left: 4px;
}
.tool svg {
    width: 66px;
    height: 52px;
    color: #ddd;
}
.tool.active {
    border: 2px solid #666;
    border-radius: 6px;
    background: #383838;
}
.mini-swatches {
    display: flex;
    justify-content: space-between;
    padding: 12px 12px 0 8px;
}
.swatches {
    position: relative;
    height: 70px;
    flex: none;
    margin-top: 9px;
}
.swatch {
    position: absolute;
    width: 40px;
    height: 40px;
    border: 2px solid #333;
}
.front {
    left: 6px;
    top: 0;
    background: #fff;
}
.back {
    left: 26px;
    top: 20px;
    background: #000;
    box-shadow: inset 0 0 0 2px #fff;
}
.slab {
    font-family: "DejaVu Serif", serif;
    text-anchor: middle;
    fill: #ddd;
    stroke: #ddd;
    stroke-width: 1;
}

/* Document */
.document {
    flex: 1;
    min-width: 0;
    display: flex;
    flex-direction: column;
    border-left: 2px solid #383838;
    border-right: 2px solid #383838;
}
.doc-tabs {
    flex: 0 0 58px;
    display: flex;
    background: #424242;
    border-bottom: 2px solid #383838;
}
.doc-tab {
    display: flex;
    align-items: center;
    gap: 19px;
    padding: 0 19px 2px 15px;
    border-right: 2px solid #383838;
    font-family: "Open Sans", "Noto Sans", sans-serif;
    font-size: 23px;
    font-weight: 700;
    color: #a8a8a8;
    white-space: nowrap;
}
.doc-tab.active {
    background: #535353;
    color: #f0f0f0;
}
.view {
    flex: 1;
    min-height: 0;
    display: flex;
}
.canvas {
    flex: 1;
    position: relative;
    display: flex;
    padding: 66px 263px 65px 264px;
    background: #282828;
}
.page {
    flex: 1;
    background: #fff;
}
/* Guides lie over the page and run to the canvas edges */
.guide {
    position: absolute;
    background: #20e8ea;
}
.v {
    top: 0;
    bottom: 0;
    width: 2px;
}
.h {
    left: 0;
    right: 0;
    height: 2px;
}
.g1 { left: 263px; }
.g2 { left: 275px; }
.g3 { left: 50%; }
.g4 { right: 274px; }
.g5 { right: 262px; }
.g6 { top: 65px; }
.g7 { top: 77px; }
.g8 { bottom: 77px; }
.g9 { bottom: 65px; }
.scrollbar {
    width: 32px;
    background: #4a4a4a;
}
.doc-status {
    flex: 0 0 38px;
    display: flex;
    background: #4b4b4b;
    border-top: 2px solid #424242;
    border-bottom: 6px solid #383838;
}
.zoom-level {
    width: 118px;
    padding-left: 23px;
    background: #424242;
    font-size: 20px;
}
.doc-info {
    gap: 45px;
    padding: 0 10px 0 32px;
    background: #535353;
    border-left: 2px solid #383838;
    border-right: 2px solid #424242;
    color: #ccc;
}
.timeline {
    flex: 0 0 58px;
    display: flex;
    background: #424242;
}

/* Panels */
.panel-tab {
    min-width: 72px;
    justify-content: flex-start;
    padding: 0 18px 3px;
    border-right: 2px solid #383838;
    font-family: "Open Sans", "Noto Sans", sans-serif;
    font-size: 21px;
    font-weight: 700;
    color: #a8a8a8;
}
.panel-tab.active {
    background: #535353;
    color: #f4f4f4;
}
.panel-menu {
    width: 20px;
    margin: 0 10px 0 auto;
}
.right {
    flex: 0 0 554px;
    display: flex;
    flex-direction: column;
    border-left: 2px solid #383838;
}
.right-body {
    flex: 1;
    min-height: 0;
    display: flex;
    gap: 2px;
}
.icon-strip {
    flex: 0 0 76px;
    background: #535353;
    border-right: 2px solid #383838;
}
.icon-group {
    min-height: 82px;
    padding-top: 1px;
    padding-bottom: 4px;
    border-bottom: 2px solid #383838;
}
.icon-group .grip {
    margin-top: 5px;
}
.icon-group button {
    width: 100%;
    height: 58px;
    color: #ddd;
}
.fx {
    font-family: "Open Sans", sans-serif;
    font-style: italic;
    font-weight: 600;
    fill: #ddd;
}
.plain {
    font-family: Inter, sans-serif;
    fill: #ddd;
}
.panels {
    flex: 1;
    min-width: 0;
    display: flex;
    flex-direction: column;
    gap: 2px;
    border-left: 2px solid #383838;
}
.panel-tabs {
    flex: 0 0 56px;
    display: flex;
    background: linear-gradient(#383838, #383838) bottom / 100% 2px no-repeat #424242;
}
.properties {
    flex: 0 0 728px;
    display: flex;
    flex-direction: column;
    background: #535353;
    border-bottom: 2px solid #383838;
}
.no-properties {
    margin: 0;
    padding: 6px 16px 0;
    line-height: 60px;
    border-bottom: 2px solid #404040;
    color: #d8d8d8;
}
.properties-body {
    flex: 1;
    display: flex;
    justify-content: flex-end;
    padding: 2px 0 50px;
}
.track {
    width: 30px;
    background: #4b4b4b;
}
.layers {
    flex: 1;
    min-height: 0;
    display: flex;
    flex-direction: column;
    background: #535353;
    border-top: 2px solid #383838;
}
.layer-row {
    flex: 0 0 56px;
    display: flex;
    align-items: center;
    padding: 0 8px 0 6px;
    border-bottom: 2px solid #404040;
}
.layer-row.filter {
    flex-basis: 64px;
    padding: 10px 6px 0 6px;
}
.layer-row.locks {
    flex-basis: 60px;
    padding-left: 10px;
    border-color: #4a4a4a;
}
.select.kind {
    width: 178px;
}
.select.kind select {
    padding-left: 42px;
}
.select.kind .lens {
    justify-self: start;
    margin-left: 18px;
    color: #ddd;
}
.select.blend {
    width: 264px;
}
.filter-icons {
    flex: 1;
    display: flex;
    justify-content: space-between;
    padding: 0 24px;
}
.toggle {
    appearance: none;
    width: 20px;
    height: 36px;
    border: 2px solid #666;
    border-radius: 10px;
    background: radial-gradient(circle 8px at 8px 8px, #ddd 100%, #454545 100%);
}
.amount {
    margin-left: auto;
    display: flex;
    align-items: center;
    gap: 6px;
    color: #ccc;
}
.amount span {
    display: flex;
    height: 36px;
    border: 2px solid #666;
    border-radius: 6px;
    background: #454545;
    color: #eee;
}
.amount input {
    width: 70px;
    padding-left: 6px;
}
.amount button {
    width: 30px;
    border-left: 2px solid #666;
}
.lock-label {
    color: #ccc;
}
.lock-icons {
    display: flex;
    margin-left: 4px;
}
.lock-icons button {
    width: 44px;
}
.dim {
    color: #8c8c8c;
}
.layer-area {
    flex: 1;
    min-height: 0;
    display: flex;
    background: #4d4d4d;
}
.layer-list {
    flex: 1;
}
.layer-list li {
    display: flex;
    height: 50px;
    background: #535353;
    border-bottom: 2px solid #464646;
}
.layer-list .tall {
    height: 68px;
}
.vis {
    width: 61px;
    color: #ddd;
    border-right: 2px solid #464646;
}
.layer {
    flex: 1;
    display: flex;
    align-items: center;
    gap: 6px;
    padding-left: 6px;
}
.selected .layer {
    background: #6a6a6a;
}
.group-name {
    margin-left: 16px;
}
.thumb {
    width: 64px;
    height: 48px;
    margin-right: 10px;
    border: 2px solid #2c2c2c;
    background: #fff;
}
.locked {
    margin: 0 34px 0 auto;
}
.layer-actions {
    flex: 0 0 50px;
    display: flex;
    justify-content: flex-end;
    padding-right: 40px;
    border-top: 2px solid #404040;
}
.layer-actions button {
    width: 54px;
    color: #ddd;
}
.layer-actions .dim {
    color: #8c8c8c;
}

/* Dock */
.dock {
    position: absolute;
    bottom: 10px;
    left: 114px;
    right: 114px;
    height: 154px;
    display: flex;
    padding: 0 6px 0 4px;
    border: 2px solid rgba(255, 255, 255, 0.25);
    border-radius: 44px;
    background:
        linear-gradient(rgba(190, 90, 110, 0.25), rgba(190, 90, 110, 0)),
        linear-gradient(to right, #5c84b6, #7080bb 35%, #8580bd 58%, #927fc0 80%, #ab76b4);
    box-shadow: 0 0 40px rgba(0, 0, 0, 0.3);
}
.dock li {
    flex: 1;
    position: relative;
    display: flex;
    flex-direction: column;
    align-items: center;
    padding-top: 20px;
}
.dock svg, .cc {
    width: 100px;
    height: 100px;
}
.dock li > svg {
    filter: drop-shadow(0 2px 2px rgba(0, 0, 0, 0.25));
}
.dock .running::after {
    content: "";
    width: 8px;
    height: 8px;
    margin-top: 20px;
    border-radius: 50%;
    background: #100a40;
}
.dock .divider {
    flex: 0 0 59px;
}
.dock .divider::before {
    content: "";
    width: 2px;
    height: 114px;
    background: rgba(60, 30, 100, 0.6);
}
.badge {
    position: absolute;
    top: 9px;
    right: 4px;
    width: 46px;
    height: 46px;
    border-radius: 50%;
    background: #fc4040;
    color: #fff;
    font-size: 26px;
    line-height: 46px;
    text-align: center;
}
.cc {
    border-radius: 23px;
    background:
        radial-gradient(circle at 50% 0, #ff0000, rgba(255, 0, 0, 0) 50%),
        radial-gradient(circle at 0 30%, #ff10b0, rgba(255, 16, 176, 0) 60%),
        radial-gradient(circle at 10% 100%, #4090ff, rgba(64, 144, 255, 0) 60%),
        radial-gradient(circle at 90% 100%, #40e050, rgba(64, 224, 80, 0) 40%),
        linear-gradient(#ff6010, #ffc810 60%);
}
.cal-month {
    font-size: 22px;
    font-weight: 600;
    fill: #fff;
    text-anchor: middle;
}
.cal-day {
    font-size: 62px;
    font-weight: 300;
    fill: #222;
    text-anchor: middle;
}
.route {
    font-size: 12px;
    font-weight: 600;
    fill: #fff;
    text-anchor: middle;
}
.ps {
    font-family: "Open Sans", sans-serif;
    font-size: 60px;
    font-weight: 700;
    fill: #31a8ff;
    text-anchor: middle;
}
.petals rect {
    mix-blend-mode: multiply;
}
```
